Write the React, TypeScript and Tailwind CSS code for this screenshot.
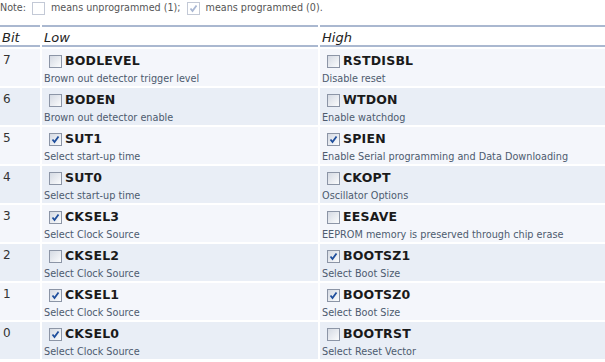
import React from "react";

type Fuse = { name: string; desc: string; on: boolean };

const rows: { bit: number; low: Fuse; high: Fuse }[] = [
  { bit: 7, low: { name: "BODLEVEL", desc: "Brown out detector trigger level", on: false }, high: { name: "RSTDISBL", desc: "Disable reset", on: false } },
  { bit: 6, low: { name: "BODEN", desc: "Brown out detector enable", on: false }, high: { name: "WTDON", desc: "Enable watchdog", on: false } },
  { bit: 5, low: { name: "SUT1", desc: "Select start-up time", on: true }, high: { name: "SPIEN", desc: "Enable Serial programming and Data Downloading", on: true } },
  { bit: 4, low: { name: "SUT0", desc: "Select start-up time", on: false }, high: { name: "CKOPT", desc: "Oscillator Options", on: false } },
  { bit: 3, low: { name: "CKSEL3", desc: "Select Clock Source", on: true }, high: { name: "EESAVE", desc: "EEPROM memory is preserved through chip erase", on: false } },
  { bit: 2, low: { name: "CKSEL2", desc: "Select Clock Source", on: false }, high: { name: "BOOTSZ1", desc: "Select Boot Size", on: true } },
  { bit: 1, low: { name: "CKSEL1", desc: "Select Clock Source", on: true }, high: { name: "BOOTSZ0", desc: "Select Boot Size", on: true } },
  { bit: 0, low: { name: "CKSEL0", desc: "Select Clock Source", on: true }, high: { name: "BOOTRST", desc: "Select Reset Vector", on: false } },
];

function Box({ on, faded }: { on: boolean; faded?: boolean }) {
  return (
    <span
      className={
        "inline-flex items-center justify-center w-[13px] h-[13px] shrink-0 border " +
        (faded
          ? "border-[#c3c9d6] bg-white"
          : "border-[#8c95a6] bg-gradient-to-br from-[#d5dae3] to-[#fbfcfd]")
      }
    >
      {on && (
        <svg width="9" height="9" viewBox="0 0 9 9">
          <path
            d="M1.5 4.5 L3.5 7 L7.5 1.5"
            fill="none"
            stroke={faded ? "#a9b7d3" : "#1f4e9c"}
            strokeWidth="1.8"
          />
        </svg>
      )}
    </span>
  );
}

function Cell({ f, dark }: { f: Fuse; dark: boolean }) {
  return (
    <div className={"h-[37px] pl-[2px] pt-[5px] " + (dark ? "bg-[#e9eef6]" : "bg-[#f4f6fb]")}>
      <div className="flex items-center gap-[3px] pl-[5px] h-[14px]">
        <Box on={f.on} />
        <span className="text-[12.5px] font-bold text-[#1a1a1a] leading-none tracking-[0.2px]">{f.name}</span>
      </div>
      <div className="mt-[6px] text-[9.7px] leading-none text-[#4d5b6f]">{f.desc}</div>
    </div>
  );
}

export default function App() {
  return (
    <div className="w-[605px] h-[362px] overflow-hidden bg-white font-['DejaVu_Sans',Verdana,sans-serif]">
      <div className="flex items-center h-[17px] text-[9.6px] text-[#555] gap-[6px] pl-0">
        <span>Note:</span>
        <Box on={false} faded />
        <span>means unprogrammed (1);</span>
        <Box on={true} faded />
        <span>means programmed (0).</span>
      </div>
      <div className="mt-[8px] grid grid-cols-[40px_276px_1fr] gap-x-[2px] gap-y-[2px]">
        {["Bit", "Low", "High"].map((h) => (
          <div
            key={h}
            className="h-[22px] border-y-2 border-[#aab8d0] pl-[2px] pt-[1px] text-[13px] italic text-[#222]"
          >
            {h}
          </div>
        ))}
        {rows.map((r, i) => {
          const dark = i % 2 === 1;
          return (
            <React.Fragment key={r.bit}>
              <div className={"h-[37px] pl-[3px] pt-[2px] text-[12px] text-[#333] " + (dark ? "bg-[#e9eef6]" : "bg-[#f4f6fb]")}>
                {r.bit}
              </div>
              <Cell f={r.low} dark={dark} />
              <Cell f={r.high} dark={dark} />
            </React.Fragment>
          );
        })}
      </div>
    </div>
  );
}
